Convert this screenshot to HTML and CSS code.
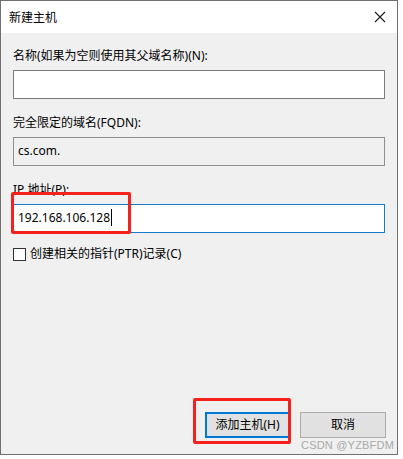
FILE: index.html
```html
<!DOCTYPE html>
<html lang="zh-CN">
<head>
    <meta charset="UTF-8">
    <meta name="viewport" content="width=device-width, initial-scale=1.0">
    <title>新建主机</title>
    <link rel="stylesheet" href="styles.css">
</head>
<body>
    <div class="dialog">
        <div class="titlebar">
            <span class="title">新建主机</span>
            <svg class="close" width="12" height="12" viewBox="0 0 12 12">
                <path d="M1 1 L11 11 M11 1 L1 11" stroke="#1a1a1a" stroke-width="1.1" fill="none"/>
            </svg>
        </div>
        <div class="content">
            <div class="label">名称(如果为空则使用其父域名称)(N):</div>
            <div class="field"></div>

            <div class="label spaced">完全限定的域名(FQDN):</div>
            <div class="field readonly">cs.com.</div>

            <div class="label spaced">IP 地址(P):</div>
            <div class="field focused">192.168.106.128<span class="caret"></span></div>

            <div class="check-row">
                <span class="checkbox"></span>
                <span>创建相关的指针(PTR)记录(C)</span>
            </div>

            <div class="buttons">
                <div class="btn default">添加主机(H)</div>
                <div class="btn">取消</div>
            </div>
        </div>
        <!-- screenshot annotations -->
        <div class="mark mark-ip"></div>
        <div class="mark mark-add"></div>
        <div class="watermark">CSDN @YZBFDM</div>
    </div>
</body>
</html>
```

FILE: styles.css
```css
body {
    margin: 0;
    background: #fff;
    font-family: "Noto Sans", "Noto Sans CJK SC", sans-serif;
    font-size: 12px;
    color: #000;
}
.dialog {
    position: relative;
    box-sizing: border-box;
    width: 398px;
    height: 455px;
    border: 1px solid #707070;
    background: #f0f0f0;
    display: flex;
    flex-direction: column;
}
.titlebar {
    height: 32px;
    background: #fff;
    display: flex;
    align-items: center;
    justify-content: space-between;
    padding: 0 9px 0 8px;
}
.title {
    font-size: 12px;
}
.close {
    margin-right: 2px;
}
.content {
    flex: 1;
    display: flex;
    flex-direction: column;
    padding: 15px 11px 16px 12px;
}
.label {
    line-height: 16px;
    height: 16px;
}
.label.spaced {
    margin-top: 16px;
}
.field {
    box-sizing: border-box;
    width: 372px;
    height: 29px;
    margin-top: 6px;
    border: 1px solid #7a7a7a;
    background: #fff;
    padding: 0 4px;
    line-height: 26px;
    font-size: 12px;
}
.field.readonly {
    background: #f0f0f0;
    border-color: #8f8f8f;
}
.field.focused {
    border-color: #1979ca;
}
.caret {
    display: inline-block;
    width: 1px;
    height: 17px;
    background: #000;
    vertical-align: -4px;
    margin-left: 1px;
}
.check-row {
    margin-top: 13px;
    display: flex;
    align-items: center;
    gap: 4px;
    line-height: 16px;
}
.checkbox {
    box-sizing: border-box;
    width: 13px;
    height: 13px;
    border: 1px solid #333;
    background: #fff;
}
.buttons {
    margin-top: auto;
    display: flex;
    justify-content: flex-end;
    gap: 10px;
}
.btn {
    box-sizing: border-box;
    width: 86px;
    height: 26px;
    border: 1px solid #adadad;
    background: #e1e1e1;
    text-align: center;
    line-height: 24px;
}
.btn.default {
    width: 85px;
    border: 2px solid #0078d7;
    line-height: 22px;
}
.mark {
    position: absolute;
    border: 3px solid #f5211c;
    border-radius: 2px;
}
.mark-ip {
    left: 10px;
    top: 191px;
    width: 114px;
    height: 36px;
}
.mark-add {
    left: 192px;
    top: 397px;
    width: 92px;
    height: 40px;
}
.watermark {
    position: absolute;
    left: 300px;
    top: 438px;
    font-family: "Liberation Sans", sans-serif;
    font-size: 11px;
    color: #a9a9a9;
    letter-spacing: 0.2px;
}
```
